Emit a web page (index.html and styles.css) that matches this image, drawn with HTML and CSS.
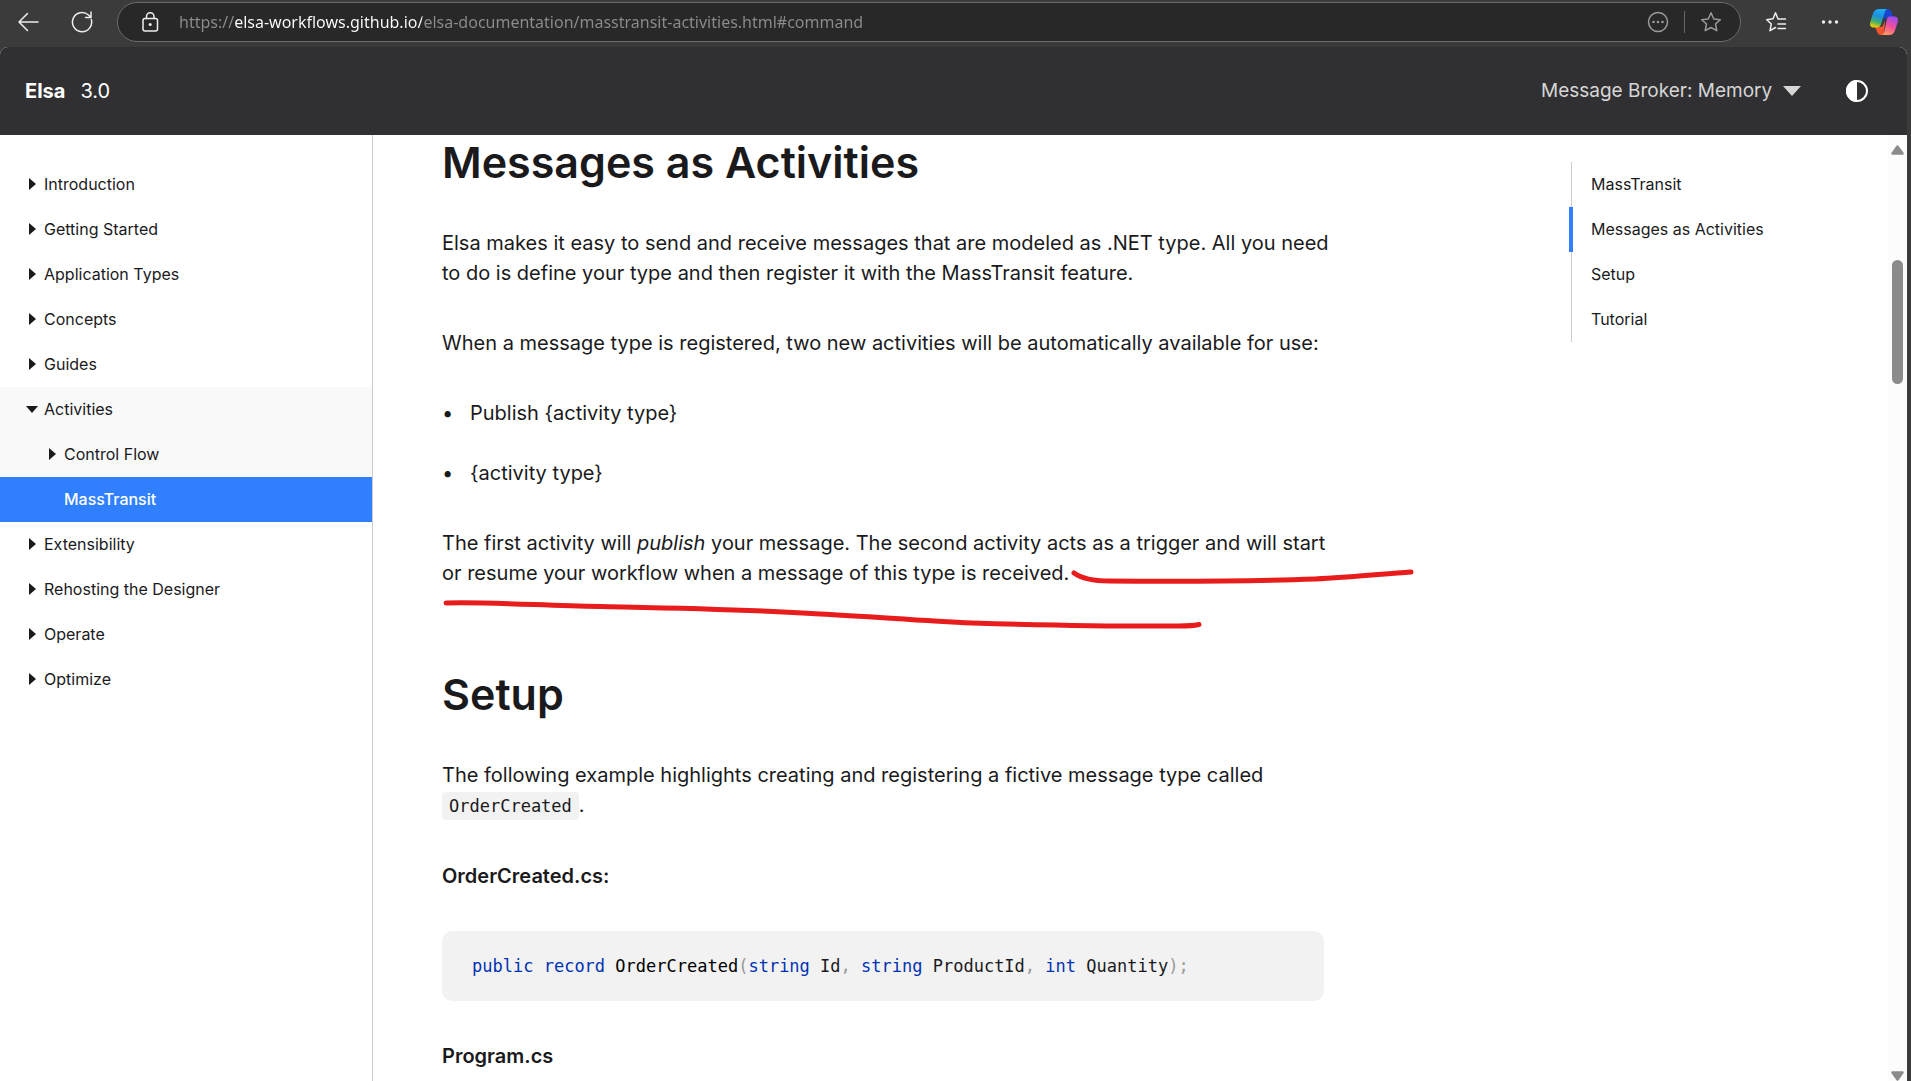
FILE: index.html
```html
<!DOCTYPE html>
<html lang="en">
<head>
<meta charset="utf-8">
<meta name="viewport" content="width=device-width, initial-scale=1">
<title>MassTransit | Elsa 3.0</title>
<link rel="stylesheet" href="styles.css">
</head>
<body>
<div class="toolbar">
  <button class="tool" type="button" aria-label="Back">
    <svg width="22" height="20" viewBox="0 0 22 20"><path d="M21 10H2M10.500 1.500 2 10l8.500 8.500"/></svg>
  </button>
  <button class="tool" type="button" aria-label="Refresh">
    <svg width="22" height="22" viewBox="0 0 22 22"><path d="M20.300 8.500A9.600 9.600 0 1 1 17.500 4l2 2M20 1v5.500h-5.500"/></svg>
  </button>
  <div class="address">
    <svg class="lock" width="17" height="20" viewBox="0 0 17 20"><rect x="1" y="6.500" width="14.500" height="12.500" rx="2"/><path d="M4.500 6.500V4.500a3.700 3.700 0 0 1 7.500 0v2"/><circle class="dot" cx="8.200" cy="12.500" r="1.500"/></svg>
    <input class="url" type="text" aria-label="Address" value="https://elsa-workflows.github.io/elsa-documentation/masstransit-activities.html#command">
    <button class="address-button" type="button" aria-label="Page actions">
      <svg width="22" height="22" viewBox="0 0 22 22"><circle cx="11" cy="11" r="9.500"/><g class="dot"><circle cx="6.500" cy="11" r="1.300"/><circle cx="11" cy="11" r="1.300"/><circle cx="15.500" cy="11" r="1.300"/></g></svg>
    </button>
    <span class="divider"></span>
    <button class="address-button" type="button" aria-label="Add to favorites">
      <svg width="22" height="22" viewBox="0 0 22 22"><path d="M11 1.800 13.800 8 20.300 8.700 15.500 13l1.300 6.700L11 16.500l-5.800 3.200L6.500 13 1.700 8.700 8.200 8z"/></svg>
    </button>
  </div>
  <button class="tool" type="button" aria-label="Favorites">
    <svg width="22" height="22" viewBox="0 0 22 22"><path d="M20.500 8H13L10.500 1.800 8 7.800 1.700 8.700 6.300 13 5 19.700l5.500-3.200M13 13h7.500M13 17.500h7.500"/></svg>
  </button>
  <button class="tool" type="button" aria-label="Settings and more">
    <svg width="22" height="6" viewBox="0 0 22 6"><g class="dot"><circle cx="4.500" cy="3" r="1.700"/><circle cx="11" cy="3" r="1.700"/><circle cx="17.500" cy="3" r="1.700"/></g></svg>
  </button>
  <button class="tool" type="button" aria-label="Copilot">
    <svg class="copilot" width="28" height="26" viewBox="0 0 28 26">
      <defs>
        <linearGradient id="cool" x1="0.600" y1="0" x2="0.300" y2="1"><stop offset="0" stop-color="#1baef5"/><stop offset=".4" stop-color="#1f8fe0"/><stop offset=".7" stop-color="#3fae70"/><stop offset="1" stop-color="#f5d000"/></linearGradient>
        <linearGradient id="warm" x1="0.700" y1="0" x2="0.300" y2="1"><stop offset="0" stop-color="#a04bf0"/><stop offset=".5" stop-color="#ee4f9c"/><stop offset="1" stop-color="#ff9a60"/></linearGradient>
      </defs>
      <path fill="#1746d1" d="M13 0h5c2 0 3 1.500 3.500 3l1.500 5h-4c-3 0-4 1-5 4z"/>
      <path fill="#f4552f" d="M5 18h5c2 0 3-1 4-4l1-2-1 12c-.5 1.500-1.500 2-3 2-2 0-3-1-3.800-3z"/>
      <path fill="url(#cool)" d="M9 0h9c-2 0-2.800 1.500-3.500 4L11.500 14c-1 3-2 4.500-4.500 4.500H3.500C.5 18.500-.5 16 .3 13L3 4.500C4 1.500 6 0 9 0z"/>
      <path fill="url(#warm)" d="M19.500 7.500h5c3 0 4 2.500 3.200 5.500L25 21.500C24 24.500 22 26 19 26h-8c2 0 2.800-1.500 3.500-4l2-10c.6-3 1-4.500 3-4.500z"/>
    </svg>
  </button>
</div>

<div class="page">
  <header class="site-header">
    <a class="brand" href="#"><strong>Elsa</strong><span>3.0</span></a>
    <div class="header-tools">
      <label class="broker">
        <select aria-label="Message broker"><option>Message Broker: Memory</option></select>
        <svg width="18" height="10" viewBox="0 0 18 10"><path d="M0 0h18L9 10z"/></svg>
      </label>
      <button class="theme" type="button" aria-label="Switch color theme">
        <svg width="24" height="24" viewBox="0 0 24 24"><circle cx="12" cy="12" r="10" fill="none" stroke="#fff" stroke-width="2"/><path fill="#fff" d="M12 1a11 11 0 0 0 0 22z"/></svg>
      </button>
    </div>
  </header>

  <div class="columns">
    <nav class="sidebar" aria-label="Documentation">
      <a class="nav-item" href="#"><i class="caret"></i>Introduction</a>
      <a class="nav-item" href="#"><i class="caret"></i>Getting Started</a>
      <a class="nav-item" href="#"><i class="caret"></i>Application Types</a>
      <a class="nav-item" href="#"><i class="caret"></i>Concepts</a>
      <a class="nav-item" href="#"><i class="caret"></i>Guides</a>
      <div class="nav-group">
        <a class="nav-item" href="#"><i class="caret open"></i>Activities</a>
        <a class="nav-item child" href="#"><i class="caret"></i>Control Flow</a>
        <a class="nav-item child current" href="#" aria-current="page"><i class="caret none"></i>MassTransit</a>
      </div>
      <a class="nav-item" href="#"><i class="caret"></i>Extensibility</a>
      <a class="nav-item" href="#"><i class="caret"></i>Rehosting the Designer</a>
      <a class="nav-item" href="#"><i class="caret"></i>Operate</a>
      <a class="nav-item" href="#"><i class="caret"></i>Optimize</a>
    </nav>

    <main class="content">
      <article class="article">
        <h1 id="messages">Messages as Activities</h1>
        <p>Elsa makes it easy to send and receive messages that are modeled as .NET type. All you need to do is define your type and then register it with the MassTransit feature.</p>
        <p>When a message type is registered, two new activities will be automatically available for use:</p>
        <ul class="bullets">
          <li>Publish {activity type}</li>
          <li>{activity type}</li>
        </ul>
        <p class="marked">The first activity will <em>publish</em> your message. The second activity acts as a trigger and will start or resume your workflow when a message of this type is received.
          <svg class="ink" width="980" height="110" viewBox="0 0 980 110" aria-hidden="true"><path d="M632 45C639 50 650 53 667 53C740 53.500 820 53 873 51C910 49 940 46 969 44"/><path d="M4 75C50 74 90 77 158 78.500C230 80 300 81 378 86C430 88.500 480 93 530 95C600 97 680 98.500 737 98C745 98 750 98 757 96.500"/></svg>
        </p>
        <h1 id="setup">Setup</h1>
        <p>The following example highlights creating and registering a fictive message type called <code>OrderCreated</code>.</p>
        <p><strong>OrderCreated.cs:</strong></p>
        <pre class="code"><code><b>public</b> <b>record</b> <span class="type">OrderCreated</span><i>(</i><b>string</b> Id<i>,</i> <b>string</b> ProductId<i>,</i> <b>int</b> Quantity<i>);</i></code></pre>
        <p><strong>Program.cs</strong></p>
      </article>
      <nav class="toc" aria-label="On this page">
        <a href="#top">MassTransit</a>
        <a class="active" href="#messages">Messages as Activities</a>
        <a href="#setup">Setup</a>
        <a href="#tutorial">Tutorial</a>
      </nav>
    </main>

    <div class="scrollbar" aria-hidden="true">
      <svg width="13" height="10" viewBox="0 0 13 10"><path d="M5.500.8q1-1 2 0l5 7q.8 2-1 2h-10q-1.800 0-1-2z"/></svg>
      <div class="track"><div class="thumb"></div></div>
      <svg width="13" height="10" viewBox="0 0 13 10"><path d="M5.500 9.200q1 1 2 0l5-7q.8-2-1-2h-10q-1.800 0-1 2z"/></svg>
    </div>
  </div>
</div>
</body>
</html>
```
FILE: styles.css
```css
* { box-sizing: border-box; }

body {
  margin: 0;
  height: 100vh;
  display: flex;
  flex-direction: column;
  overflow: hidden;
  background: #3b3b3b;
  color: #1a1a1c;
  font-family: Inter, "Liberation Sans", sans-serif;
}

a { color: inherit; text-decoration: none; }
button { border: 0; padding: 0; background: none; }

/* Browser toolbar */
.toolbar {
  flex: none;
  display: flex;
  align-items: center;
  height: 47px;
  padding: 0 0 3px 1px;
}
.toolbar svg {
  fill: none;
  stroke: #eee;
  stroke-width: 1.5;
  stroke-linejoin: round;
  stroke-linecap: round;
}
.toolbar .dot { fill: #eee; stroke: none; }
.toolbar .copilot { stroke: none; }
.tool {
  width: 54px;
  height: 40px;
  display: flex;
  align-items: center;
  justify-content: center;
}
.address {
  flex: 1;
  display: flex;
  align-items: center;
  height: 40px;
  margin: 0 8px;
  padding: 0 18px 0 24px;
  border: 1px solid #6b6b6b;
  border-radius: 20px;
  background: #282828;
}
.url {
  flex: 1;
  margin: 0 20px;
  padding: 0;
  border: 0;
  font: 16px/24px "Noto Sans", sans-serif;
  color: transparent;
  background: linear-gradient(90deg, #8c8c8c 56px, #fff 56px, #fff 243px, #8c8c8c 243px);
  -webkit-background-clip: text;
  background-clip: text;
}
.address-button { display: flex; }
.address-button svg { stroke: #9a9a9a; }
.address-button .dot { fill: #9a9a9a; }
.divider { width: 1px; height: 22px; margin: 0 15px; background: #666; }

/* Site header */
.page {
  flex: 1;
  min-height: 0;
  display: flex;
  flex-direction: column;
  margin-right: 4px;
  overflow: hidden;
  border-radius: 8px 8px 0 0;
  background: #fff;
}
.site-header {
  flex: none;
  display: flex;
  align-items: center;
  justify-content: space-between;
  height: 88px;
  padding: 0 38px 0 25px;
  background: #303032;
  color: #fff;
}
.brand { display: flex; gap: 15px; font-size: 20px; line-height: 24px; }
.brand strong { font-weight: 700; }
.header-tools { display: flex; align-items: center; gap: 44px; }
.broker { display: flex; align-items: center; gap: 10px; color: #d6d6d6; }
.broker svg { fill: #d6d6d6; }
.broker select {
  appearance: none;
  border: 0;
  padding: 0;
  background: none;
  color: inherit;
  font: 19px/26px Inter, sans-serif;
}
.theme { display: flex; }

/* Columns below the header */
.columns { flex: 1; min-height: 0; display: flex; }

.sidebar {
  flex: none;
  width: 373px;
  padding-top: 27px;
  border-right: 1px solid #ccc;
}
.nav-item {
  display: flex;
  align-items: center;
  gap: 6px;
  height: 45px;
  padding: 0 0 2px 26px;
  font-size: 16px;
}
.nav-group { background: #f9f9f9; }
.child { padding-left: 46px; }
.current { background: #307fff; color: #fff; font-weight: 500; }
.caret {
  width: 7px;
  margin: 0 2px 0 3px;
  border: solid transparent;
  border-width: 6px 0 6px 7px;
  border-left-color: currentColor;
}
.caret.open {
  width: 12px;
  margin: 2px 0 0;
  border-width: 7px 6px 0;
  border-color: currentColor transparent transparent;
}
.caret.none { visibility: hidden; }

.content {
  flex: 1;
  min-width: 0;
  display: flex;
  justify-content: space-between;
  gap: 40px;
  padding-left: 69px;
  overflow: hidden;
}
.article { width: 882px; padding-top: 1px; font-size: 20px; line-height: 30px; }
.article h1 {
  margin: 80px 0 40px;
  font-size: 43px;
  line-height: 52px;
  font-weight: 600;
}
.article h1:first-child { margin-top: 0; }
.article p { margin: 0 -12px 40px 0; }
.article strong { font-weight: 600; }
.article code { font: 17px/30px "DejaVu Sans Mono", monospace; }
.article p code {
  padding: 4px 7px;
  border-radius: 4px;
  background: #f2f2f2;
}
.bullets {
  display: flex;
  flex-direction: column;
  gap: 30px;
  margin: 0 0 40px;
  padding: 0;
  list-style: none;
}
.bullets li { display: flex; }
.bullets li::before { content: "•"; width: 28px; }
.marked { position: relative; }
.ink {
  position: absolute;
  top: 0;
  left: 0;
  fill: none;
  stroke: #e81c1c;
  stroke-width: 5;
  stroke-linecap: round;
}
.code {
  margin: 0 0 40px;
  padding: 20px 30px;
  border-radius: 10px;
  background: #f2f2f2;
}
.code code { display: block; }
.code b { color: #0033b3; font-weight: 400; }
.code i { color: #999; font-style: normal; }
.code .type { color: #000; }

.toc {
  flex: none;
  align-self: flex-start;
  width: 317px;
  margin-top: 27px;
  border-left: 1px solid #ccc;
}
.toc a {
  display: flex;
  align-items: center;
  height: 45px;
  margin-left: -3px;
  padding: 0 0 2px 18px;
  border-left: 4px solid transparent;
  font-size: 16px;
}
.toc .active { border-color: #307fff; }

.scrollbar {
  flex: none;
  width: 19px;
  display: flex;
  flex-direction: column;
  align-items: center;
  padding-top: 10px;
  background: #fcfcfc;
}
.scrollbar svg { flex: none; fill: #8b8b8b; }
.track { flex: 1; padding-top: 105px; }
.thumb { width: 11px; height: 124px; border-radius: 6px; background: #8b8b8b; }
```
